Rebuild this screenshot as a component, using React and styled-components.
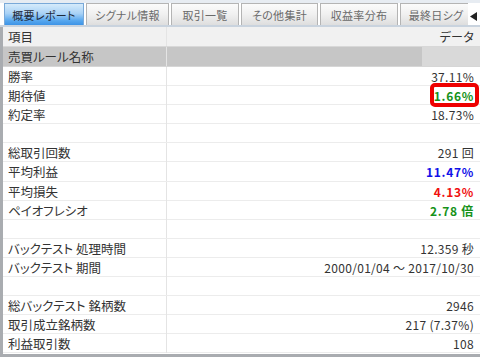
import React from 'react';
import styled, { createGlobalStyle } from 'styled-components';

const GlobalStyle = createGlobalStyle`
  html, body {
    margin: 0;
    padding: 0;
    background: #ffffff;
  }
  body {
    font-family: "Noto Sans CJK JP", "Liberation Sans", sans-serif;
    font-feature-settings: "palt";
  }
`;

const tabs = ['概要レポート', 'シグナル情報', '取引一覧', 'その他集計', '収益率分布', '最終日シグ'];
const tabWidths = [80, 83, 68, 77, 78, 72];

const rows = [
  { label: '勝率', value: '37.11%' },
  { label: '期待値', value: '1.66%', tone: 'green', bold: true, marked: true },
  { label: '約定率', value: '18.73%' },
  { label: '', value: '' },
  { label: '総取引回数', value: '291 回' },
  { label: '平均利益', value: '11.47%', tone: 'blue', bold: true },
  { label: '平均損失', value: '4.13%', tone: 'red', bold: true },
  { label: 'ペイオフレシオ', value: '2.78 倍', tone: 'green', bold: true },
  { label: '', value: '' },
  { label: 'バックテスト 処理時間', value: '12.359 秒' },
  { label: 'バックテスト 期間', value: '2000/01/04 ～ 2017/10/30' },
  { label: '', value: '' },
  { label: '総バックテスト 銘柄数', value: '2946' },
  { label: '取引成立銘柄数', value: '217 (7.37%)' },
  { label: '利益取引数', value: '108' },
];

const tones = {
  green: '#16921a',
  blue: '#1010e8',
  red: '#f01010',
};

const App = () => {
  return (
    <Frame>
      <GlobalStyle />
      <TabStrip>
        <TabList>
          {tabs.map((t, i) => (
            <Tab key={t} $active={i === 0} $w={tabWidths[i]}>{t}</Tab>
          ))}
        </TabList>
        <ScrollArrow>
          <svg width="8" height="9" viewBox="0 0 8 9">
            <path d="M7 0 L7 9 L0 4.5 Z" fill="#222" />
          </svg>
        </ScrollArrow>
      </TabStrip>
      <Grid>
        <HeaderRow>
          <LabelCell>項目</LabelCell>
          <ValueCell>データ</ValueCell>
        </HeaderRow>
        <RuleRow>
          <LabelCell>売買ルール名称</LabelCell>
          <RuleValue>
            <RuleSwatch />
          </RuleValue>
        </RuleRow>
        {rows.map((r, i) => (
          <Row key={i}>
            <LabelCell>{r.label}</LabelCell>
            <ValueCell $tone={r.tone} $bold={r.bold}>
              {r.value}
              {r.marked && <Marker />}
            </ValueCell>
          </Row>
        ))}
      </Grid>
    </Frame>
  );
};

const Frame = styled.div`
  width: 480px;
  height: 359px;
  overflow: hidden;
  background: #ffffff;
  box-sizing: border-box;
  display: flex;
  flex-direction: column;
`;

const TabStrip = styled.div`
  height: 27px;
  box-sizing: border-box;
  display: flex;
  align-items: flex-end;
  padding: 3px 0 0 4px;
  background: linear-gradient(#e7ecf2 0 3px, #ffffff 3px);
  border-bottom: 2px solid #c9d3de;
`;

const TabList = styled.div`
  flex: 1;
  display: flex;
  gap: 2px;
  overflow: hidden;
  height: 100%;
`;

const Tab = styled.div`
  flex: 0 0 ${p => p.$w}px;
  box-sizing: border-box;
  height: 100%;
  display: flex;
  align-items: center;
  justify-content: center;
  font-size: 11px;
  letter-spacing: 0.3px;
  white-space: nowrap;
  overflow: hidden;
  color: ${p => (p.$active ? '#1f2a3a' : '#6a6a6a')};
  border: 1px solid ${p => (p.$active ? '#7aa9d8' : '#b4b4b4')};
  border-bottom: none;
  background: ${p =>
    p.$active
      ? 'linear-gradient(#d6ebfb 0%, #a9d2f6 45%, #55a6ee 80%, #3d93e6 100%)'
      : 'linear-gradient(#fbfbfb 0%, #f0f0f0 50%, #dedede 100%)'};
`;

const ScrollArrow = styled.div`
  width: 12px;
  height: 100%;
  display: flex;
  align-items: center;
  justify-content: center;
  background: #ffffff;
  padding-top: 4px;
  box-sizing: border-box;
`;

const Grid = styled.div`
  flex: 1;
  display: flex;
  flex-direction: column;
  border-left: 3px solid #a9acb0;
  border-bottom: 3px solid #a9acb0;
  margin-bottom: 2px;
  position: relative;
`;

const Row = styled.div`
  height: 19.1px;
  display: grid;
  grid-template-columns: 164px 1fr;
  box-sizing: border-box;
  border-bottom: 1px solid #ececec;
  font-size: 12.5px;
  color: #333333;
  flex-shrink: 0;
`;

const HeaderRow = styled(Row)`
  height: 20px;
  background: #f1f1f1;
  border-bottom: 1px solid #d8d8d8;
`;

const RuleRow = styled(Row)`
  height: 20px;
  background: #c6c6c6;
  border-bottom: 1px solid #d6d6d6;
`;

const LabelCell = styled.div`
  display: flex;
  align-items: center;
  padding-left: 5px;
  border-right: 1px solid #e4e4e4;
  white-space: nowrap;
`;

const ValueCell = styled.div`
  position: relative;
  display: flex;
  align-items: center;
  justify-content: flex-end;
  padding-right: 6px;
  white-space: nowrap;
  font-size: 12px;
  color: ${p => tones[p.$tone] || '#333333'};
  font-weight: ${p => (p.$bold ? 700 : 400)};
  letter-spacing: ${p => (p.$bold ? '0.7px' : '0.3px')};
`;

const RuleValue = styled.div`
  display: flex;
  justify-content: flex-end;
`;

const RuleSwatch = styled.div`
  width: 58px;
  height: 100%;
  background: #d9d9d9;
`;

const Marker = styled.span`
  position: absolute;
  right: 1px;
  top: -3px;
  width: 49px;
  height: 24px;
  box-sizing: border-box;
  border: 4px solid #ee0000;
  border-radius: 5px;
`;

export default App;
